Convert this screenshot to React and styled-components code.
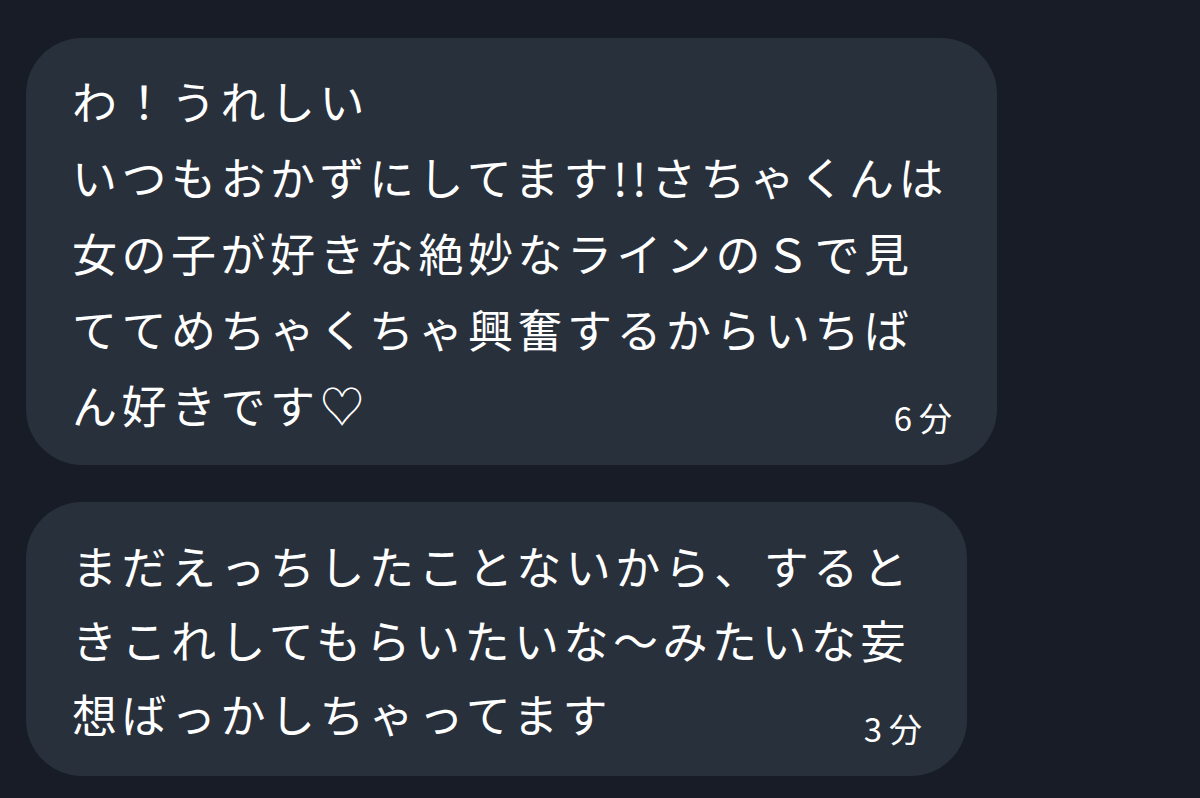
import React from 'react'
import styled, { createGlobalStyle } from 'styled-components'

const GlobalStyle = createGlobalStyle`
  html, body {
    margin: 0;
    background: #171c26;
  }
  body {
    font-family: "Noto Sans CJK JP", "Noto Sans", sans-serif;
    color: #fff;
  }
`

const Thread = styled.div`
  display: flex;
  flex-direction: column;
  align-items: flex-start;
  gap: 37px;
  padding: 38px 0 0 26px;
  min-height: 760px;
  box-sizing: border-box;
`

const Bubble = styled.div`
  display: flex;
  flex-direction: column;
  box-sizing: border-box;
  width: ${p => p.width}px;
  padding: ${p => p.pt}px 45px ${p => p.pb}px 46px;
  background: #28303b;
  border-radius: 56px;
`

const Line = styled.div`
  font-size: 45px;
  line-height: ${p => p.lh}px;
  letter-spacing: 4.5px;
  white-space: pre;
`

const LastRow = styled.div`
  display: flex;
  justify-content: space-between;
  align-items: flex-end;
`

const Time = styled.span`
  margin-bottom: ${p => p.mb}px;
  font-size: 33px;
  line-height: 1;
  letter-spacing: 7px;
  margin-right: -7px;
`

const messages = [
  {
    lines: [
      'わ！うれしい',
      'いつもおかずにしてます!!さちゃくんは',
      '女の子が好きな絶妙なラインのＳで見',
      'ててめちゃくちゃ興奮するからいちば',
      'ん好きです♡'
    ],
    time: '6分',
    width: 971,
    pt: 25,
    pb: 22,
    lh: 76,
    mb: 9
  },
  {
    lines: [
      'まだえっちしたことないから、すると',
      'きこれしてもらいたいな〜みたいな妄',
      '想ばっかしちゃってます'
    ],
    time: '3分',
    width: 941,
    pt: 27,
    pb: 25,
    lh: 74,
    mb: 6
  }
]

export default function App() {
  return (
    <>
      <GlobalStyle />
      <Thread>
        {messages.map((m, i) => {
          const last = m.lines[m.lines.length - 1]
          return (
            <Bubble key={i} width={m.width} pt={m.pt} pb={m.pb}>
              {m.lines.slice(0, -1).map((text, j) => (
                <Line key={j} lh={m.lh}>{text}</Line>
              ))}
              <LastRow>
                <Line lh={m.lh}>{last}</Line>
                <Time mb={m.mb}>{m.time}</Time>
              </LastRow>
            </Bubble>
          )
        })}
      </Thread>
    </>
  )
}
